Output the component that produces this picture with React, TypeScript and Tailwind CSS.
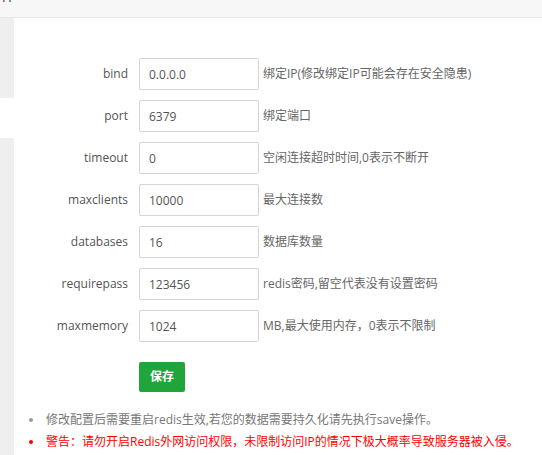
import React from "react";

const rows = [
  { label: "bind", value: "0.0.0.0", desc: "绑定IP(修改绑定IP可能会存在安全隐患)" },
  { label: "port", value: "6379", desc: "绑定端口" },
  { label: "timeout", value: "0", desc: "空闲连接超时时间,0表示不断开" },
  { label: "maxclients", value: "10000", desc: "最大连接数" },
  { label: "databases", value: "16", desc: "数据库数量" },
  { label: "requirepass", value: "123456", desc: "redis密码,留空代表没有设置密码" },
  { label: "maxmemory", value: "1024", desc: "MB,最大使用内存，0表示不限制" },
];

export default function App() {
  return (
    <div
      className="w-[542px] h-[455px] overflow-hidden bg-white flex flex-col"
      style={{ fontFamily: '"Open Sans", "Noto Sans CJK SC", sans-serif' }}
    >
      <div className="h-[18px] shrink-0 bg-[#f7f7f7] border-b border-[#e6e6e6] overflow-hidden">
        <div className="-mt-[13px] text-[14px] leading-[16px] text-[#333] pl-[1px]">件</div>
      </div>
      <div className="flex flex-1">
        <div className="w-[14px] shrink-0 flex flex-col">
          <div className="h-[80px] bg-[#efefef]" />
          <div className="h-[40px] bg-white" />
          <div className="flex-1 bg-[#efefef]" />
        </div>
        <div className="flex-1 flex flex-col pt-[40px]">
          <div className="flex flex-col gap-[10px]">
            {rows.map((r) => (
              <div key={r.label} className="flex items-center h-[32px]">
                <div className="w-[114px] text-right text-[12px] text-[#555]">{r.label}</div>
                <input
                  readOnly
                  value={r.value}
                  className="ml-[11px] w-[120px] h-[32px] border border-[#d5d5d5] rounded-[2px] px-[9px] text-[12px] text-[#555] outline-none"
                  style={{ fontFamily: '"Open Sans", sans-serif' }}
                />
                <div className="ml-[4px] text-[12px] text-[#666] whitespace-nowrap">{r.desc}</div>
              </div>
            ))}
          </div>
          <div className="mt-[20px] pl-[125px]">
            <button className="w-[46px] h-[30px] bg-[#20a53a] rounded-[2px] text-white text-[12px] font-semibold">
              保存
            </button>
          </div>
          <ul className="mt-[17px] text-[12px] leading-[22px]">
            <li className="flex items-center whitespace-nowrap text-[#777]">
              <span className="ml-[15px] w-[4px] h-[4px] rounded-full bg-[#999]" />
              <span className="ml-[13px]">修改配置后需要重启redis生效,若您的数据需要持久化请先执行save操作。</span>
            </li>
            <li className="flex items-center whitespace-nowrap text-[#ff0000]">
              <span className="ml-[15px] w-[4px] h-[4px] rounded-full bg-[#ff0000]" />
              <span className="ml-[13px]">警告：请勿开启Redis外网访问权限，未限制访问IP的情况下极大概率导致服务器被入侵。</span>
            </li>
          </ul>
        </div>
      </div>
    </div>
  );
}
